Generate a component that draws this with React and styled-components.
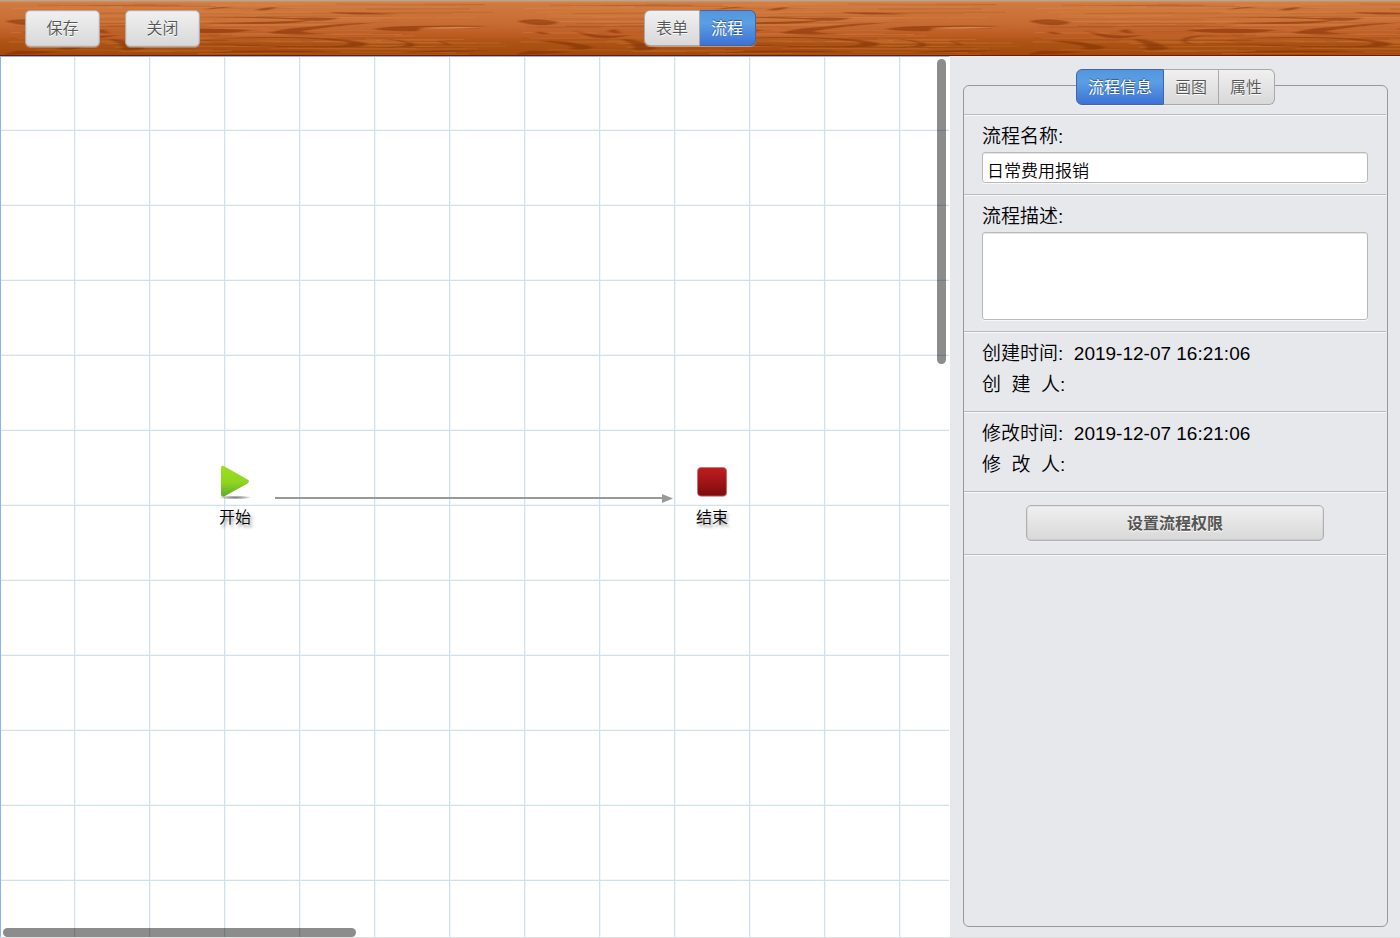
import React, { useState } from "react";
import styled, { createGlobalStyle, css } from "styled-components";

const GlobalStyle = createGlobalStyle`
  *, *::before, *::after { box-sizing: border-box; }
  body {
    margin: 0;
    font-family: "Liberation Sans", Arial, "Noto Sans CJK SC", sans-serif;
    font-size: 19px;
    font-weight: 350;
    color: #000;
    background: #e7e8ec;
  }
`;

const Page = styled.div`
  min-height: 100vh;
  display: flex;
  flex-direction: column;
  border-bottom: 1px solid #dedede;
`;

const Header = styled.header`
  position: relative;
  isolation: isolate;
  display: grid;
  grid-template-columns: 1fr auto 1fr;
  align-items: start;
  height: 56px;
  padding: 9px 25px 0;
  border-top: 1px solid #a9a9a7;
  background: #b96028;
`;

const WoodSvg = styled.svg`
  position: absolute;
  inset: 0;
  z-index: -1;
  width: 100%;
  height: 100%;
`;

const Actions = styled.div`
  display: flex;
  gap: 25px;
`;

const raised = css`
  font-family: inherit;
  font-size: 16px;
  line-height: 20px;
  color: #555;
  text-shadow: 0 1px 0 #fff;
  background: linear-gradient(#f0f0f0, #d8d8d8);
  border: 1px solid #a9a9a9;
  cursor: pointer;
`;

const Button = styled.button`
  ${raised}
  width: ${(p) => (p.$wide ? "298px" : "75px")};
  height: ${(p) => (p.$wide ? "36px" : "37px")};
  padding: ${(p) => (p.$wide ? "2px 0 0" : "0")};
  border-radius: 5px;
  font-weight: ${(p) => (p.$wide ? 700 : 350)};
  border-color: ${(p) => (p.$wide ? "#b0b0b0" : "#b5aaa3")};
  box-shadow: inset 0 0 0 1px rgba(0, 0, 0, 0.05), 0 1px 0 rgba(255, 255, 255, 0.25);
`;

const TabGroup = styled.div`
  display: flex;
`;

const Tab = styled.button`
  ${raised}
  height: 36px;
  padding: 2px 11px 0;
  font-weight: 350;
  border-left-width: 0;
  box-shadow: 0 1px 0 rgba(255, 255, 255, 0.35);
  &:first-child {
    border-left-width: 1px;
    border-radius: 6px 0 0 6px;
  }
  &:last-child {
    padding-right: 12px;
    border-radius: 0 6px 6px 0;
  }
  ${(p) =>
    p.$active &&
    css`
      color: #fff;
      font-weight: 400;
      text-shadow: 0 -1px 1px rgba(0, 0, 0, 0.45);
      background: linear-gradient(#5396df, #5a9fe4 35%, #3e72d6);
      border-color: #4067a3;
    `}
`;

const Main = styled.main`
  flex: 1;
  display: flex;
`;

const Canvas = styled.section`
  position: relative;
  flex: 1;
  min-width: 0;
  border-top: 1px solid #8ab2f7;
  border-left: 1px solid #8ab2f7;
  border-right: 1px solid #fff;
  background-color: #fff;
  background-image:
    linear-gradient(transparent 73px, #cfe1ec 73px, #cfe1ec 74px, transparent 74px),
    linear-gradient(90deg, transparent 73px, #cfe1ec 73px, #cfe1ec 74px, #f1f7fa 74px),
    linear-gradient(transparent 72px, #f1f7fa 72px, #f1f7fa 73px, transparent 73px);
  background-size: 75px 75px;
`;

const Scrollbar = styled.div`
  position: absolute;
  background: rgba(0, 0, 0, 0.45);
  border-radius: 5px;
  ${(p) =>
    p.$vertical
      ? css`
          top: 2px;
          right: 3px;
          width: 9px;
          height: 305px;
        `
      : css`
          left: 2px;
          bottom: 0;
          width: 353px;
          height: 9px;
        `}
`;

const Node = styled.div`
  position: absolute;
  left: ${(p) => p.$x}px;
  top: ${(p) => p.$y}px;
  width: 48px;
  display: flex;
  flex-direction: column;
  align-items: center;
  gap: 6px;
  font-size: 16px;
  line-height: 24px;
  text-shadow: 2px 3px 3px rgba(0, 0, 0, 0.4);
`;

const Connector = styled.svg`
  position: absolute;
  left: 274px;
  top: 435px;
`;

const Side = styled.aside`
  display: flex;
  width: 450px;
  padding: 29px 12px 10px 13px;
  background: #e7e8ec;
`;

const Panel = styled.form`
  flex: 1;
  border: 1px solid #97989b;
  border-radius: 6px;
`;

const PanelTabs = styled.div`
  display: flex;
  justify-content: center;
  margin-top: -17px;
  padding-bottom: 9px;
`;

const Row = styled.section`
  display: flex;
  flex-direction: column;
  margin-right: 1px;
  padding: ${(p) => (p.$center ? "13px 0 13px" : "6px 18px 11px")};
  align-items: ${(p) => (p.$center ? "center" : "stretch")};
  border-top: 1px solid #b9babd;
  box-shadow: inset 0 1px 0 #f8f8fa;
`;

const RowEnd = styled.div`
  height: 2px;
  margin-right: 1px;
  border-top: 1px solid #b9babd;
  border-bottom: 1px solid #f8f8fa;
`;

const Label = styled.label`
  line-height: 31px;
`;

const field = css`
  width: 100%;
  margin: 0;
  font-family: inherit;
  font-size: 17px;
  font-weight: 350;
  color: #000;
  background: #fff;
  border: 1px solid #b9b9b9;
  border-radius: 3px;
  box-shadow: inset 0 1px 1px #e4e4e4, 0 1px 0 #f8f8fa;
  outline: none;
`;

const TextInput = styled.input`
  ${field}
  height: 31px;
  padding: 4px 4px 0;
`;

const TextArea = styled.textarea`
  ${field}
  display: block;
  height: 88px;
  padding: 4px;
  resize: none;
`;

const Info = styled.div`
  line-height: 31px;
  white-space: pre;
`;

/* Thin, nearly horizontal grain lines; the seed keeps them the same on every render. */
const grain = (() => {
  let seed = 7;
  const rnd = () => {
    seed = (seed * 16807) % 2147483647;
    return seed / 2147483647;
  };
  return Array.from({ length: 110 }, () => {
    const len = 40 + rnd() * 170;
    const x = rnd() * (512 - len);
    const y = 2 + rnd() * 51;
    const bend = (rnd() - 0.5) * 3;
    return {
      d: `M${x} ${y}q${len / 2} ${bend} ${len} ${bend / 2}`,
      light: rnd() > 0.55,
      opacity: 0.08 + rnd() * 0.22,
    };
  });
})();

const knots = [
  "M4 20q20 -4 42 1q-8 4 -22 3q-12 -1 -20 -4z",
  "M21 31q10 -1 15 2q-8 1 -15 -2z",
  "M60 29q24 8 58 5q-26 6 -44 1z",
  "M94 30l8 -2l6 4q-6 1 -14 -2z",
  "M24 40q24 -1 42 3q12 1 14 4q-10 3 -24 1q16 -3 -32 -8z",
  "M108 38q22 1 30 7q8 2 4 3q-12 3 -24 1q10 -3 -10 -11z",
  "M4 54q8 -5 20 -4q30 0 34 1q-30 2 -40 2z",
  "M190 35q-22 0 -28 4q-2 3 8 4q-14 0 -13 -4q4 -6 33 -4z",
  "M160 29q40 -3 90 0q-20 4 -50 3q-26 0 -40 -3z",
  "M268 32q14 -5 40 -6q30 -4 64 -4q-40 3 -70 8q-4 2 30 3q-40 2 -64 -1z",
  "M170 16q90 -1 120 1q26 -1 48 0q-14 4 -34 2q-50 -3 -134 -3z",
  "M200 22q80 -1 110 -3q-20 6 -110 3z",
  "M328 11q28 0 70 2q-40 1 -52 0q-10 0 -18 -2z",
  "M254 9q10 -3 22 -3q-10 5 -22 3z",
  "M203 9q12 -4 30 -3q-14 1 -30 3z",
  "M205 40q20 -4 80 -4q60 1 80 6q4 4 -20 4q-50 1 -100 -1q-30 -1 -40 -5q12 4 44 4q50 2 86 1q18 -1 10 -4q-30 -4 -74 -4q-40 0 -66 2z",
  "M372 28q14 -3 40 -3q40 -1 76 0q-40 2 -66 2q-8 2 -4 3q-30 1 -46 -2z",
  "M372 37q40 2 42 7q0 3 -26 2q22 -1 16 -4q-6 -3 -32 -5z",
  "M436 40q14 1 12 5q-6 -3 -12 -5z",
  "M205 52q50 -4 130 -1q-60 0 -130 1z",
  "M400 52q30 -4 90 -2q-50 1 -90 2z",
];

function Wood() {
  return (
    <WoodSvg aria-hidden="true">
      <defs>
        <linearGradient id="woodTone" x1="0" y1="0" x2="0" y2="1">
          <stop offset="0" stopColor="#dc9055" />
          <stop offset="0.04" stopColor="#d07a3f" />
          <stop offset="0.4" stopColor="#c76d34" />
          <stop offset="0.64" stopColor="#bb5a21" />
          <stop offset="0.7" stopColor="#b05617" />
          <stop offset="1" stopColor="#a1480b" />
        </linearGradient>
        <filter id="woodSoft" x="0" y="0" width="1" height="1">
          <feGaussianBlur stdDeviation="2 0.5" />
        </filter>
        <pattern id="woodGrain" x="1" y="0" width="512" height="55" patternUnits="userSpaceOnUse">
          {grain.map((g, i) => (
            <path
              key={i}
              d={g.d}
              fill="none"
              stroke={g.light ? "#e39355" : "#8d3a0c"}
              strokeWidth="1"
              opacity={g.opacity}
            />
          ))}
          <g filter="url(#woodSoft)">
            {knots.map((d) => (
              <path key={d} d={d} fill="#7d2c06" opacity="0.5" />
            ))}
            <path d="M416 27q30 -2 64 -1q-30 3 -64 1z" fill="#e4945c" opacity="0.7" />
          </g>
        </pattern>
      </defs>
      <rect width="100%" height="100%" fill="url(#woodTone)" />
      <rect width="100%" height="100%" fill="url(#woodGrain)" />
      <rect y="54" width="100%" height="1" fill="#6a1d04" />
    </WoodSvg>
  );
}

function StartIcon() {
  return (
    <svg width="34" height="36" viewBox="0 0 34 36" aria-hidden="true">
      <defs>
        <linearGradient id="startFill" x1="0" y1="0" x2="0" y2="1">
          <stop offset="0" stopColor="#9be01e" />
          <stop offset="0.55" stopColor="#8fd420" />
          <stop offset="1" stopColor="#5fa82f" />
        </linearGradient>
        <radialGradient id="startShade">
          <stop offset="0" stopColor="#555" stopOpacity="0.75" />
          <stop offset="0.6" stopColor="#777" stopOpacity="0.5" />
          <stop offset="1" stopColor="#999" stopOpacity="0" />
        </radialGradient>
      </defs>
      <ellipse cx="17" cy="33.5" rx="17" ry="2" fill="url(#startShade)" />
      <path
        d="M3 4.200Q3 0.800 6.200 2.200L29.600 15.600Q32.400 17.500 29.600 19.400L7 32Q3 34 3 30z"
        fill="url(#startFill)"
      />
    </svg>
  );
}

function EndIcon() {
  return (
    <svg width="34" height="36" viewBox="0 0 34 36" aria-hidden="true">
      <defs>
        <linearGradient id="endFill" x1="0" y1="0" x2="0" y2="1">
          <stop offset="0" stopColor="#c01d1f" />
          <stop offset="0.5" stopColor="#a01517" />
          <stop offset="1" stopColor="#7b0c0e" />
        </linearGradient>
      </defs>
      <rect x="3" y="5" width="29" height="28" rx="4" fill="#999" opacity="0.5" />
      <rect x="2.500" y="3.500" width="29" height="28.500" rx="3.500" fill="url(#endFill)" stroke="#c96a6a" strokeOpacity="0.7" />
    </svg>
  );
}

function Tabs({ items, initial, label }) {
  const [active, setActive] = useState(initial);
  return (
    <TabGroup role="tablist" aria-label={label}>
      {items.map((item) => (
        <Tab
          key={item}
          type="button"
          role="tab"
          aria-selected={item === active}
          $active={item === active}
          onClick={() => setActive(item)}
        >
          {item}
        </Tab>
      ))}
    </TabGroup>
  );
}

export default function App() {
  return (
    <>
      <GlobalStyle />
      <Page>
        <Header>
          <Wood />
          <Actions>
            <Button type="button">保存</Button>
            <Button type="button">关闭</Button>
          </Actions>
          <Tabs items={["表单", "流程"]} initial="流程" />
        </Header>
        <Main>
          <Canvas>
            <Connector width="400" height="14" viewBox="0 0 400 14" aria-hidden="true">
              <path d="M0 6h388" stroke="#999" strokeWidth="2" />
              <path d="M387 2L398 6.500l-11 4.500z" fill="#999" />
            </Connector>
            <Node $x={210} $y={407}>
              <StartIcon />
              开始
            </Node>
            <Node $x={687} $y={407}>
              <EndIcon />
              结束
            </Node>
            <Scrollbar $vertical />
            <Scrollbar />
          </Canvas>
          <Side>
            <Panel onSubmit={(e) => e.preventDefault()}>
              <PanelTabs>
                <Tabs items={["流程信息", "画图", "属性"]} initial="流程信息" />
              </PanelTabs>
              <Row>
                <Label htmlFor="flow-name">流程名称:</Label>
                <TextInput id="flow-name" type="text" defaultValue="日常费用报销" />
              </Row>
              <Row>
                <Label htmlFor="flow-desc">流程描述:</Label>
                <TextArea id="flow-desc" />
              </Row>
              <Row>
                <Info>{"创建时间:\u00a0\u00a02019-12-07 16:21:06"}</Info>
                <Info>{"创\u00a0\u00a0建\u00a0\u00a0人:"}</Info>
              </Row>
              <Row>
                <Info>{"修改时间:\u00a0\u00a02019-12-07 16:21:06"}</Info>
                <Info>{"修\u00a0\u00a0改\u00a0\u00a0人:"}</Info>
              </Row>
              <Row $center>
                <Button type="button" $wide>
                  设置流程权限
                </Button>
              </Row>
              <RowEnd />
            </Panel>
          </Side>
        </Main>
      </Page>
    </>
  );
}
